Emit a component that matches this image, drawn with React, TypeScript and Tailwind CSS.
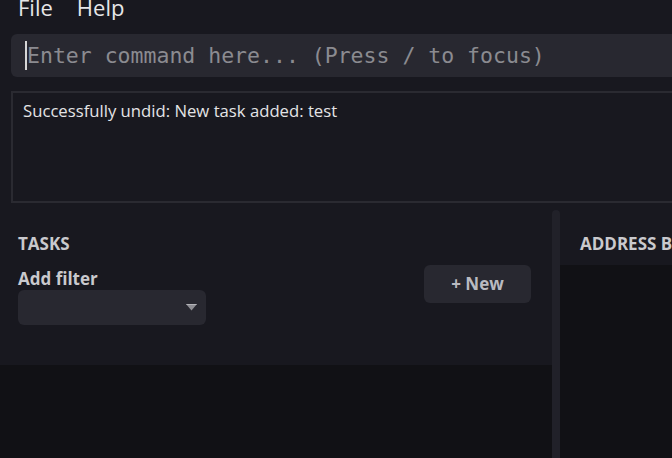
import React from "react";

const sans = { fontFamily: '"Open Sans", "Noto Sans", sans-serif' };

function CommandInput() {
  return (
    <div className="mt-[14px] pl-[11px]">
      <div className="flex h-[43px] w-[980px] items-center rounded-[6px] bg-[#282830] pl-[14px]">
        <span className="h-[29px] w-[2px] bg-[#d6d6d6]" />
        <span
          className="whitespace-pre text-[21.5px] leading-none text-[#8b8b90]"
          style={{ fontFamily: '"DejaVu Sans Mono", "Liberation Mono", monospace' }}
        >
          Enter command here... (Press / to focus)
        </span>
      </div>
    </div>
  );
}

function OutputBox() {
  return (
    <div className="mt-[14px] pl-[11px]">
      <div className="h-[112px] w-[980px] border-2 border-[#2a2a31] px-[10px] pt-[6px]">
        <p className="text-[16.7px] leading-6 text-[#e4e4e6]">
          Successfully undid: New task added: test
        </p>
      </div>
    </div>
  );
}

function TasksPanel() {
  return (
    <div className="flex w-[552px] flex-col">
      <div className="bg-[#18181f] pb-[40px] pl-[18px] pr-[21px] pt-[28px]">
        <h2 className="text-[17px] font-bold text-[#c9c9cd]">TASKS</h2>
        <div className="mt-[10px] flex items-start justify-between">
          <div className="flex flex-col">
            <label className="text-[17px] font-bold leading-[23px] text-[#c9c9cd]">Add filter</label>
            <div className="flex h-[35px] w-[188px] items-center justify-end rounded-[6px] bg-[#282830] pr-[9px]">
              <svg width="11" height="7" viewBox="0 0 11 7">
                <polygon points="0,0 11,0 5.5,6.5" fill="#8e8e94" />
                <polyline points="0.5,0.5 10.5,0.5" stroke="#b4b4b8" strokeWidth="1" />
              </svg>
            </div>
          </div>
          <button className="-mt-[2px] flex h-[38px] w-[107px] items-center justify-center rounded-[6px] bg-[#282830] text-[17px] font-bold text-[#babac0]">
            + New
          </button>
        </div>
      </div>
      <div className="flex-1 bg-[#111115]" />
    </div>
  );
}

function AddressPanel() {
  return (
    <div className="flex w-[420px] flex-col">
      <div className="h-[62px] bg-[#18181f] pl-[20px] pt-[28px]">
        <h2 className="whitespace-nowrap text-[17px] font-bold text-[#c9c9cd]">ADDRESS BOOK</h2>
      </div>
      <div className="flex-1 bg-[#111115]" />
    </div>
  );
}

export default function App() {
  return (
    <div className="h-[458px] w-full overflow-hidden bg-[#18181f]" style={sans}>
      <div className="flex h-full w-[1000px] flex-col">
        {/* menu bar, scrolled slightly off the top */}
        <div className="h-[20px] overflow-hidden">
          <div className="-mt-[9px] flex gap-[24px] pl-[18px] text-[22px] text-[#e6e6e8]">
            <span>File</span>
            <span>Help</span>
          </div>
        </div>
        <CommandInput />
        <OutputBox />
        <div className="flex flex-1">
          <TasksPanel />
          <div className="flex w-[8px] flex-col pt-[7px]">
            <div className="flex-1 rounded-t-full bg-[#212129]" />
          </div>
          <AddressPanel />
        </div>
      </div>
    </div>
  );
}
